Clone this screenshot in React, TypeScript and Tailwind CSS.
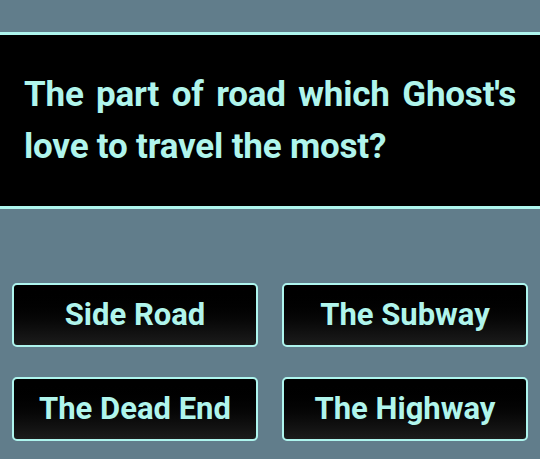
const answers = ["Side Road", "The Subway", "The Dead End", "The Highway"];

export default function App() {
    return (
        <div className="w-[540px] h-[459px] bg-[#617d8b] pt-8 overflow-hidden" style={{ fontFamily: "Roboto, 'Liberation Sans', sans-serif" }}>
            {/* Question */}
            <div className="h-[177px] bg-black border-y-[3px] border-[#aef5ee] flex items-center px-6">
                <p className="text-[35px] leading-[52px] font-bold tracking-[-0.2px] text-[#b0f5ec] text-justify [text-align-last:left] w-full">
                    The part of road which Ghost's love to travel the most?
                </p>
            </div>

            {/* Answers */}
            <div className="grid grid-cols-2 gap-x-6 gap-y-[30px] px-3 mt-[74px]">
                {answers.map((a) => (
                    <button
                        key={a}
                        className="h-16 rounded-[5px] border-[2.5px] border-[#aef5ee] bg-gradient-to-b from-black to-[#1c1c1c] text-[#b0f5ec] text-[31px] font-bold flex items-center justify-center"
                    >
                        {a}
                    </button>
                ))}
            </div>
        </div>
    );
}
